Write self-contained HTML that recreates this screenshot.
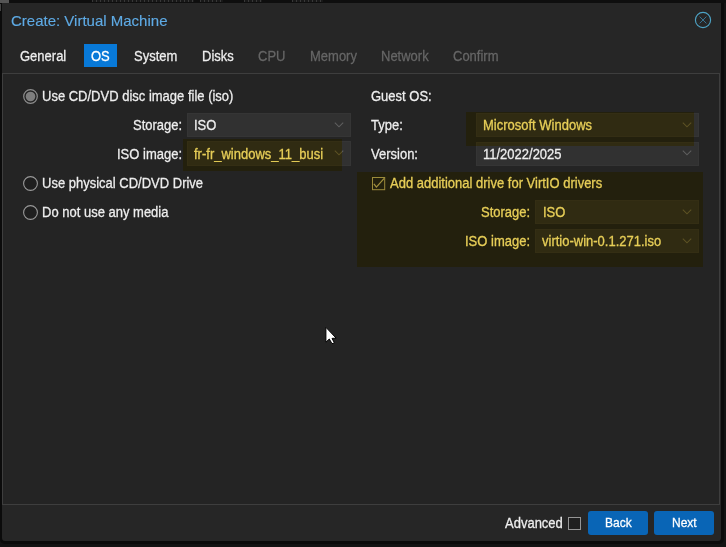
<!DOCTYPE html>
<html><head><meta charset="utf-8">
<style>
*{margin:0;padding:0;box-sizing:border-box}
html,body{width:726px;height:547px;overflow:hidden;background:#131313;font-family:"Liberation Sans",sans-serif;font-size:13px;color:#eeeeee}
.abs{position:absolute}
#bgtop{left:0;top:0;width:726px;height:3px;background:#0e0e0e}
#shadow{left:0;top:0;width:723.5px;height:544px;background:#0b0b0b;border-radius:0 0 5px 5px}
.frag{position:absolute;top:0;height:2px;background:repeating-linear-gradient(90deg,#383838 0 1.5px,#181818 1.5px 4px)}
#dlg{left:1.5px;top:3px;width:719px;height:538px;background:#262626;border-radius:0 0 3px 3px}
#title{position:absolute;left:11px;top:12.6px;font-size:15px;color:#5eaae4;white-space:nowrap;line-height:15px;-webkit-text-stroke:0.15px currentColor}
.t{position:absolute;white-space:nowrap;line-height:13px;height:13px;transform:scaleY(1.1);transform-origin:0 0;-webkit-text-stroke:0.25px currentColor}
.tabd{color:#666}
#ostab{left:84px;top:44px;width:33px;height:23px;background:#0879d8}
#panel{left:2px;top:73px;width:718px;height:432px;border:1px solid #3e3e3e;background:#242424}
.field{position:absolute;background:#313131;border:1px solid #353535}
.btn{position:absolute;top:511px;height:24px;background:#0965b6;border-radius:3px}
.hl{position:absolute;filter:blur(0.5px);background:#f8dd5c;mix-blend-mode:multiply}
</style></head><body>
<div class="abs" id="shadow"></div>
<div class="abs" id="bgtop"></div>
<div class="frag" style="left:92px;width:102px"></div><div class="frag" style="left:200px;width:23px"></div><div class="frag" style="left:244px;width:18px"></div><div class="frag" style="left:292px;width:31px"></div>
<div class="abs" style="left:0;top:0;width:9px;height:2.5px;background:#555"></div><div class="abs" style="left:0;top:3.5px;width:1px;height:7px;background:#444"></div>
<div class="abs" id="dlg"></div>
<div id="title">Create: Virtual Machine</div>
<svg class="abs" style="left:693px;top:10px" width="20" height="20" viewBox="0 0 20 20">
 <circle cx="10" cy="10" r="7.6" fill="none" stroke="#4da2c4" stroke-width="1.15"/>
 <path d="M6.6 6.6L13.4 13.4M13.4 6.6L6.6 13.4" stroke="#3a7c9e" stroke-width="0.9"/>
</svg>
<div class="abs" id="ostab"></div>

<div class="t " style="left:20px;top:48.7px;">General</div>
<div class="t " style="left:91px;top:48.7px;color:#fff">OS</div>
<div class="t " style="left:134px;top:48.7px;">System</div>
<div class="t " style="left:202px;top:48.7px;">Disks</div>
<div class="t tabd" style="left:258px;top:48.7px;">CPU</div>
<div class="t tabd" style="left:310px;top:48.7px;">Memory</div>
<div class="t tabd" style="left:381px;top:48.7px;">Network</div>
<div class="t tabd" style="left:453px;top:48.7px;">Confirm</div>
<div class="abs" id="panel"></div>
<svg class="abs" style="left:23px;top:89px" width="16" height="16" viewBox="0 0 16 16">
 <circle cx="7.5" cy="7.5" r="6.8" fill="none" stroke="#8e8e8e" stroke-width="1.2"/>
 <circle cx="7.5" cy="7.5" r="4.8" fill="#7e7e7e"/></svg>
<div class="t" style="left:42px;top:89.3px;">Use CD/DVD disc image file (iso)</div>
<div class="t" style="left:133px;top:118.3px;">Storage:</div>
<div class="field" style="left:187px;top:113px;width:164px;height:24px"></div><svg class="abs" style="left:333px;top:120.5px" width="12" height="8" viewBox="0 0 12 8"><path d="M1.8 1.6L6 5.8L10.2 1.6" fill="none" stroke="#5f5f5f" stroke-width="1.05"/></svg>
<div class="t" style="left:194px;top:118.3px;">ISO</div>
<div class="t" style="left:117px;top:147.3px;">ISO image:</div>
<div class="field" style="left:187px;top:141px;width:164px;height:25px"></div><svg class="abs" style="left:333px;top:148.5px" width="12" height="8" viewBox="0 0 12 8"><path d="M1.8 1.6L6 5.8L10.2 1.6" fill="none" stroke="#5f5f5f" stroke-width="1.05"/></svg>
<div class="t" style="left:194px;top:147.3px;">fr-fr_windows_11_busi</div>
<svg class="abs" style="left:23px;top:176px" width="16" height="16" viewBox="0 0 16 16">
 <circle cx="7.5" cy="7.5" r="6.9" fill="#1f1f1f" stroke="#9a9a9a" stroke-width="1.1"/></svg>
<svg class="abs" style="left:23px;top:205px" width="16" height="16" viewBox="0 0 16 16">
 <circle cx="7.5" cy="7.5" r="6.9" fill="#1f1f1f" stroke="#9a9a9a" stroke-width="1.1"/></svg>
<div class="t" style="left:42px;top:176.2px;">Use physical CD/DVD Drive</div>
<div class="t" style="left:42px;top:205.2px;">Do not use any media</div>
<div class="t" style="left:371px;top:88.8px;">Guest OS:</div>
<div class="t" style="left:371px;top:118.3px;">Type:</div>
<div class="field" style="left:476px;top:113px;width:223px;height:24px"></div><svg class="abs" style="left:681px;top:120.5px" width="12" height="8" viewBox="0 0 12 8"><path d="M1.8 1.6L6 5.8L10.2 1.6" fill="none" stroke="#5f5f5f" stroke-width="1.05"/></svg>
<div class="t" style="left:483px;top:118.3px;">Microsoft Windows</div>
<div class="t" style="left:371px;top:147.3px;">Version:</div>
<div class="field" style="left:476px;top:141.5px;width:223px;height:24px"></div><svg class="abs" style="left:681px;top:149.0px" width="12" height="8" viewBox="0 0 12 8"><path d="M1.8 1.6L6 5.8L10.2 1.6" fill="none" stroke="#5f5f5f" stroke-width="1.05"/></svg>
<div class="t" style="left:483px;top:147.3px;">11/2022/2025</div>
<svg class="abs" style="left:372px;top:177px" width="14" height="14" viewBox="0 0 14 14">
 <rect x="0.5" y="0.5" width="12.2" height="12.2" fill="none" stroke="#a0a0a0" stroke-width="1"/>
 <path d="M1.9 6.9L4.4 10.1L12.2 1.3" fill="none" stroke="#a8a8a8" stroke-width="1.25"/></svg>
<div class="t" style="left:390px;top:176.3px;">Add additional drive for VirtIO drivers</div>
<div class="t" style="left:481px;top:204.8px;">Storage:</div>
<div class="field" style="left:535px;top:200px;width:164px;height:24px"></div><svg class="abs" style="left:681px;top:207.5px" width="12" height="8" viewBox="0 0 12 8"><path d="M1.8 1.6L6 5.8L10.2 1.6" fill="none" stroke="#5f5f5f" stroke-width="1.05"/></svg>
<div class="t" style="left:543px;top:204.8px;">ISO</div>
<div class="t" style="left:465px;top:233.8px;">ISO image:</div>
<div class="field" style="left:535px;top:229px;width:164px;height:24px"></div><svg class="abs" style="left:681px;top:236.5px" width="12" height="8" viewBox="0 0 12 8"><path d="M1.8 1.6L6 5.8L10.2 1.6" fill="none" stroke="#5f5f5f" stroke-width="1.05"/></svg>
<div class="t" style="left:542px;top:233.8px;">virtio-win-0.1.271.iso</div>
<div class="t" style="left:505px;top:516.3px;">Advanced</div>
<div class="abs" style="left:568px;top:517px;width:13px;height:13px;border:1px solid #959595;background:#1f1f1f"></div>
<div class="btn" style="left:588px;width:60px"></div>
<div class="t" style="left:605px;top:516.0px;color:#fff;font-size:12px;transform:scaleY(1.06)">Back</div>
<div class="btn" style="left:654px;width:60px"></div>
<div class="t" style="left:672px;top:516.0px;color:#fff;font-size:12px;transform:scaleY(1.06)">Next</div>
<div class="hl" style="left:183px;top:139px;width:159px;height:32px"></div>
<div class="hl" style="left:466px;top:112px;width:228px;height:34px"></div>
<div class="hl" style="left:357px;top:172px;width:346px;height:95px"></div>
<svg class="abs" style="left:324px;top:326px" width="14" height="20" viewBox="0 0 14 20">
 <path d="M1.9 1.3L1.9 16.2L5.3 13L8 17.7L10.4 16.8L8 12.4L12.1 12.1Z" fill="#fff" stroke="#000" stroke-width="1" stroke-linejoin="miter"/></svg>
</body></html>
